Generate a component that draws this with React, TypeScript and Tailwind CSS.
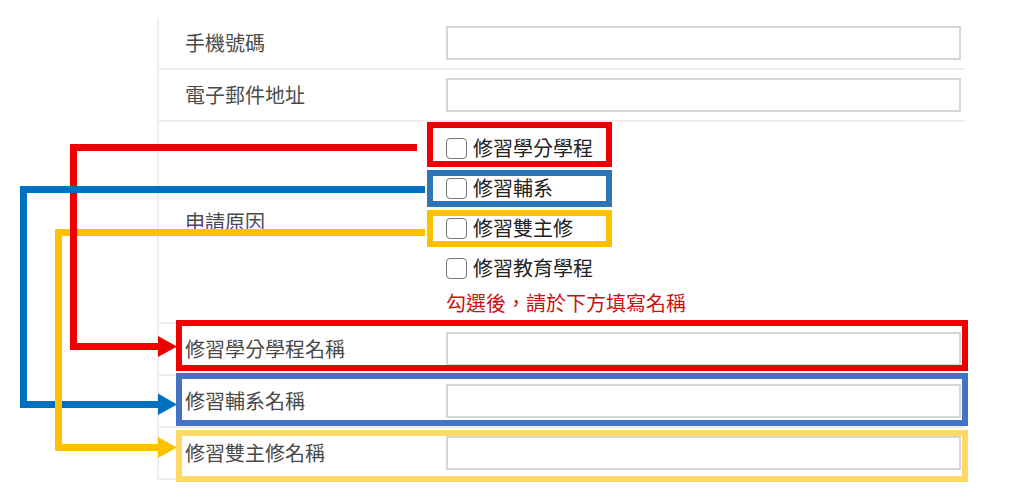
const font = { fontFamily: '"Noto Sans CJK TC", "Noto Sans", sans-serif' }

const reasons = ['修習學分學程', '修習輔系', '修習雙主修', '修習教育學程']

function TextRow({ label }: { label: string }) {
  return (
    <div className="flex h-[52px] items-center border-b-2 border-[#eeeeee]">
      <div className="w-[287px] pl-[26px] text-[20px] leading-[28px] text-[#4a4a4a]">{label}</div>
      <input
        type="text"
        className="h-[34px] w-[515px] border-2 border-[#d6d6d6] bg-white outline-none"
      />
    </div>
  )
}

function Annotations() {
  return (
    <>
      {/* highlight boxes */}
      <div className="absolute left-[427px] top-[122px] h-[45px] w-[185px] border-[6px] border-[#ee0000]" />
      <div className="absolute left-[427px] top-[170px] h-[37px] w-[185px] border-[6px] border-[#2e75b6]" />
      <div className="absolute left-[427px] top-[210px] h-[37px] w-[185px] border-[6px] border-[#ffc000]" />
      <div className="absolute left-[176px] top-[320px] h-[51px] w-[792px] border-[6px] border-[#ee0000]" />
      <div className="absolute left-[176px] top-[373px] h-[53px] w-[792px] border-[6px] border-[#4472c4]" />
      <div className="absolute left-[176px] top-[430px] h-[52px] w-[792px] border-[6px] border-[#ffd966]" />

      {/* connectors */}
      <svg className="absolute left-0 top-0" width="1018" height="498" viewBox="0 0 1018 498">
        <rect x="55" y="229" width="370" height="7" fill="#ffc000" />

        <rect x="70" y="144" width="347" height="7" fill="#ee0000" />
        <rect x="70" y="144" width="7" height="206" fill="#ee0000" />
        <rect x="70" y="343" width="90" height="7" fill="#ee0000" />
        <polygon points="158,336 177,346.5 158,357" fill="#ee0000" />

        <rect x="20" y="186" width="405" height="7" fill="#0070c0" />
        <rect x="20" y="186" width="7" height="222" fill="#0070c0" />
        <rect x="20" y="401" width="140" height="7" fill="#0070c0" />
        <polygon points="158,393.5 177,404.5 158,415" fill="#0070c0" />

        <rect x="55" y="229" width="7" height="222" fill="#ffc000" />
        <rect x="55" y="444" width="105" height="7" fill="#ffc000" />
        <polygon points="158,437 177,447.5 158,458" fill="#ffc000" />
      </svg>
    </>
  )
}

export default function App() {
  return (
    <div className="relative h-[498px] w-[1018px] overflow-hidden bg-white" style={font}>
      <div className="pl-[157px] pt-[18px]">
        <div className="w-[808px] border-l-2 border-[#eeeeee]">
          <TextRow label="手機號碼" />
          <TextRow label="電子郵件地址" />

          <div className="flex border-b-2 border-[#eeeeee]">
            <div className="flex w-[287px] items-center pl-[26px] text-[20px] leading-[28px] text-[#4a4a4a]">
              申請原因
            </div>
            <div className="pt-[6px] pb-[4px]">
              {reasons.map((r) => (
                <label key={r} className="flex h-[40px] items-center">
                  <span className="h-[21px] w-[21px] rounded-[4px] border-[1.5px] border-[#777777] bg-white" />
                  <span className="ml-[6px] text-[20px] leading-[28px] text-[#222222]">{r}</span>
                </label>
              ))}
              <div className="flex h-[30px] items-center text-[20px] leading-[28px] text-[#cc1111]">
                勾選後，請於下方填寫名稱
              </div>
            </div>
          </div>

          <TextRow label="修習學分學程名稱" />
          <TextRow label="修習輔系名稱" />
          <TextRow label="修習雙主修名稱" />
        </div>
      </div>

      <Annotations />
    </div>
  )
}
